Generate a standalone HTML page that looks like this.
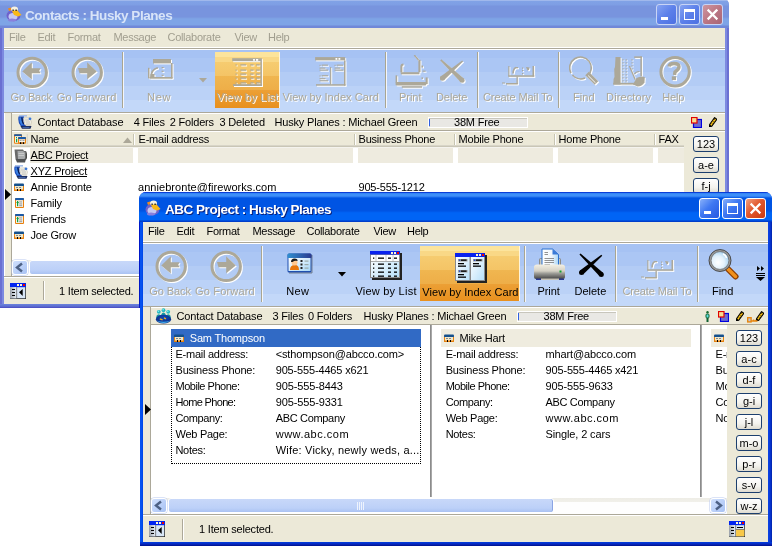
<!DOCTYPE html>
<html><head><meta charset="utf-8"><style>
html,body{margin:0;padding:0;}
body{width:773px;height:546px;overflow:hidden;background:#fff;position:relative;font-family:"Liberation Sans",sans-serif;}
div,svg{position:absolute;}
.t{white-space:nowrap;}
</style></head><body>
<div style="left:0;top:0;width:773px;height:546px;overflow:hidden;will-change:transform">
<div style="left:0px;top:-2px;width:729px;height:310px;background:#7086dc;border-radius:4px 7px 0 0"></div>
<div style="left:0px;top:-2px;width:729px;height:30px;background:linear-gradient(to bottom,#8aa2e6 0,#8aa2e6 2px,#a0b8ec 2px,#a0b8ec 3px,#80a2e6 3px,#7e9ee4 7px,#7894de 8px,#7894de 19px,#7c9ee2 20px,#7ea4e6 21px,#7ea4e6 27px,#7088d8 28px,#7088d8 30px);border-radius:4px 7px 0 0"></div>
<div style="left:0px;top:28px;width:4px;height:280px;background:linear-gradient(to right,#6a70d2 0,#6a70d2 2px,#7d8ae0 2px)"></div>
<div style="left:725px;top:28px;width:4px;height:280px;background:linear-gradient(to right,#7d8ae0 0,#7d8ae0 2px,#6a70d2 2px)"></div>
<div style="left:0px;top:304px;width:729px;height:4px;background:linear-gradient(to bottom,#6c84dc,#5c6cd0 60%,#4848c0)"></div>
<svg style="left:6px;top:6px;" width="16" height="16" viewBox="0 0 16 16"><ellipse cx="7.5" cy="9.5" rx="7" ry="5.8" fill="#6e62cc"/><ellipse cx="7" cy="10.5" rx="4.5" ry="3.5" fill="#c4c8f4"/><ellipse cx="6" cy="14" rx="4" ry="1.5" fill="#8a80dc"/><path d="M2 2.5 L5 1.5 L6 4 L3 5 Z" fill="#f08a1c"/><ellipse cx="8.5" cy="3" rx="3.5" ry="2.5" fill="#f4f0e0"/><path d="M6 5 L11 4 L15.5 9 L12 10.5 L8 9 Z" fill="#f8b818"/><rect x="6.5" y="3.5" width="1.2" height="1.5" fill="#111"/><rect x="9.5" y="3.5" width="1.2" height="1.5" fill="#111"/></svg>
<div class="t" style="left:25px;top:8.61px;font-size:13.5px;line-height:13.5px;color:#d8e4f8;font-weight:bold;letter-spacing:-0.45px">Contacts : Husky Planes</div>
<div style="left:656px;top:4px;width:19px;height:19px;border:1px solid #c8d4f6;border-radius:3px;background:linear-gradient(135deg,#86a4f2 0%,#5c80ea 50%,#4c70e2 100%)"></div>
<div style="left:661px;top:17px;width:7px;height:3px;background:#fff"></div>
<div style="left:679px;top:4px;width:19px;height:19px;border:1px solid #c8d4f6;border-radius:3px;background:linear-gradient(135deg,#86a4f2 0%,#5c80ea 50%,#4c70e2 100%)"></div>
<div style="left:684px;top:9px;width:11px;height:11px;box-sizing:border-box;border:1px solid #fff;border-top-width:3px"></div>
<div style="left:702px;top:4px;width:19px;height:19px;border:1px solid #c8d4f6;border-radius:3px;background:linear-gradient(135deg,#cf96a0 0%,#b97482 55%,#a86676 100%)"></div>
<svg style="left:706px;top:8px;" width="13" height="13" viewBox="0 0 13 13"><path d="M2.5 2.5 L10.5 10.5 M10.5 2.5 L2.5 10.5" stroke="#fff" stroke-width="2.3" stroke-linecap="square"/></svg>
<div style="left:4px;top:28px;width:721px;height:19px;background:#ece9d8"></div>
<div class="t" style="left:9px;top:31.91px;font-size:11px;line-height:11px;color:#a19e8f;font-weight:normal;letter-spacing:-0.3px">File</div>
<div class="t" style="left:37.5px;top:31.91px;font-size:11px;line-height:11px;color:#a19e8f;font-weight:normal;letter-spacing:-0.3px">Edit</div>
<div class="t" style="left:67.5px;top:31.91px;font-size:11px;line-height:11px;color:#a19e8f;font-weight:normal;letter-spacing:-0.3px">Format</div>
<div class="t" style="left:113.5px;top:31.91px;font-size:11px;line-height:11px;color:#a19e8f;font-weight:normal;letter-spacing:-0.3px">Message</div>
<div class="t" style="left:167.5px;top:31.91px;font-size:11px;line-height:11px;color:#a19e8f;font-weight:normal;letter-spacing:-0.3px">Collaborate</div>
<div class="t" style="left:234.5px;top:31.91px;font-size:11px;line-height:11px;color:#a19e8f;font-weight:normal;letter-spacing:-0.3px">View</div>
<div class="t" style="left:268px;top:31.91px;font-size:11px;line-height:11px;color:#a19e8f;font-weight:normal;letter-spacing:-0.3px">Help</div>
<div style="left:4px;top:47px;width:721px;height:3px;background:#fff"></div>
<div style="left:4px;top:48px;width:721px;height:1px;background:#aca899"></div>
<div style="left:4px;top:50px;width:721px;height:62px;background:linear-gradient(to bottom,#a6c2f3 0,#a6c2f3 8px,#abc6f4 8px,#abc6f4 22px,#b3ccf5 22px,#b3ccf5 36px,#bbd2f7 36px,#bbd2f7 50px,#c3d8f9 50px)"></div>
<div style="left:215px;top:52px;width:65px;height:56px;background:linear-gradient(to bottom,#fce49c 0,#fce49c 5px,#f9d886 5px,#f9d886 10px,#f6cc70 10px,#f4c466 24px,#f0b650 24px,#eeae48 38px,#eca036 38px,#e8901e 100%);box-shadow:inset -1px 0 0 #fff4d8"></div>
<div style="left:122px;top:52px;width:1px;height:56px;background:#a8a592;box-shadow:1px 0 0 #f4f6fa"></div>
<div style="left:385px;top:52px;width:1px;height:56px;background:#a8a592;box-shadow:1px 0 0 #f4f6fa"></div>
<div style="left:477px;top:52px;width:1px;height:56px;background:#a8a592;box-shadow:1px 0 0 #f4f6fa"></div>
<div style="left:558px;top:52px;width:1px;height:56px;background:#a8a592;box-shadow:1px 0 0 #f4f6fa"></div>
<svg style="left:16px;top:56px;" width="33" height="33" viewBox="0 0 33 33"><g transform="translate(1,1)"><circle cx="16.2" cy="16.4" r="14.2" fill="none" stroke="#ffffff" stroke-width="3"/><path d="M6.3 15.6 L15.8 6.3 V12.3 H24.6 L23.2 14.8 L24.6 17.2 H15.8 V23.5 Z" fill="#ffffff"/></g><circle cx="16.2" cy="16.4" r="14.2" fill="none" stroke="#aca899" stroke-width="3"/><path d="M6.3 15.6 L15.8 6.3 V12.3 H24.6 L23.2 14.8 L24.6 17.2 H15.8 V23.5 Z" fill="#aca899"/></svg>
<svg style="left:71px;top:56px;" width="33" height="33" viewBox="0 0 33 33"><g transform="translate(1,1)"><circle cx="16.2" cy="16.4" r="14.2" fill="none" stroke="#ffffff" stroke-width="3"/><path d="M25.8 15.6 L16.2 6.3 V12.1 H7 L8.5 17.2 H16.2 V23.3 Z" fill="#ffffff"/></g><circle cx="16.2" cy="16.4" r="14.2" fill="none" stroke="#aca899" stroke-width="3"/><path d="M25.8 15.6 L16.2 6.3 V12.1 H7 L8.5 17.2 H16.2 V23.3 Z" fill="#aca899"/></svg>
<svg style="left:148px;top:59px;" width="27" height="22" viewBox="0 0 27 22"><g transform="translate(1,1)"><rect x="5" y="0" width="18" height="4.4" fill="#ffffff"/><rect x="23" y="4" width="1.6" height="15.4" fill="#ffffff"/><rect x="1.5" y="18" width="23" height="1.7" fill="#ffffff"/><rect x="0" y="8.8" width="1.5" height="10.5" fill="#ffffff"/><path d="M3 18 Q3.5 10.5 9 9 H10" fill="none" stroke="#ffffff" stroke-width="1.6"/><rect x="2.5" y="15" width="4" height="3" fill="#ffffff"/><rect x="13.6" y="8" width="2" height="1.2" fill="#ffffff"/><rect x="13.6" y="11.7" width="2" height="1.2" fill="#ffffff"/><rect x="13.6" y="15.7" width="2" height="1.2" fill="#ffffff"/></g><rect x="5" y="0" width="18" height="4.4" fill="#aca899"/><rect x="23" y="4" width="1.6" height="15.4" fill="#aca899"/><rect x="1.5" y="18" width="23" height="1.7" fill="#aca899"/><rect x="0" y="8.8" width="1.5" height="10.5" fill="#aca899"/><path d="M3 18 Q3.5 10.5 9 9 H10" fill="none" stroke="#aca899" stroke-width="1.6"/><rect x="2.5" y="15" width="4" height="3" fill="#aca899"/><rect x="13.6" y="8" width="2" height="1.2" fill="#aca899"/><rect x="13.6" y="11.7" width="2" height="1.2" fill="#aca899"/><rect x="13.6" y="15.7" width="2" height="1.2" fill="#aca899"/></svg>
<svg style="left:199px;top:78px;" width="9" height="5" viewBox="0 0 9 5"><path d="M0 0 H8 L4 4.5 Z" fill="#aca899"/></svg>
<svg style="left:232px;top:58px;" width="32" height="30" viewBox="0 0 32 30"><g transform="translate(1,1)"><rect x="0.2" y="0.2" width="29.7" height="3" fill="#ffffff"/><rect x="28.4" y="3" width="1.5" height="25" fill="#ffffff"/><rect x="1" y="26.2" width="28.9" height="1.8" fill="#ffffff"/><rect x="3.5" y="6.3" width="1.2" height="1.2" fill="#ffffff"/><rect x="8.3" y="6.3" width="5.8" height="1.2" fill="#ffffff"/><rect x="18.2" y="6.3" width="3.3" height="1.2" fill="#ffffff"/><rect x="24" y="6.3" width="3.7" height="1.2" fill="#ffffff"/><rect x="3.5" y="11.5" width="1.2" height="1.2" fill="#ffffff"/><rect x="8.3" y="11.5" width="5.8" height="1.2" fill="#ffffff"/><rect x="18.2" y="11.5" width="3.3" height="1.2" fill="#ffffff"/><rect x="24" y="11.5" width="3.7" height="1.2" fill="#ffffff"/><rect x="3.5" y="15.5" width="1.2" height="1.2" fill="#ffffff"/><rect x="8.3" y="15.5" width="5.8" height="1.2" fill="#ffffff"/><rect x="18.2" y="15.5" width="3.3" height="1.2" fill="#ffffff"/><rect x="24" y="15.5" width="3.7" height="1.2" fill="#ffffff"/><rect x="3.5" y="19.5" width="1.2" height="1.2" fill="#ffffff"/><rect x="8.3" y="19.5" width="5.8" height="1.2" fill="#ffffff"/><rect x="18.2" y="19.5" width="3.3" height="1.2" fill="#ffffff"/><rect x="24" y="19.5" width="3.7" height="1.2" fill="#ffffff"/><rect x="3.5" y="24.3" width="1.2" height="1.2" fill="#ffffff"/><rect x="8.3" y="24.3" width="5.8" height="1.2" fill="#ffffff"/><rect x="18.2" y="24.3" width="3.3" height="1.2" fill="#ffffff"/><rect x="24" y="24.3" width="3.7" height="1.2" fill="#ffffff"/><rect x="21.1" y="1" width="1.8" height="1.8" fill="#fff"/><rect x="24" y="1" width="2.2" height="1.8" fill="#fff"/></g><rect x="0.2" y="0.2" width="29.7" height="3" fill="#aca899"/><rect x="28.4" y="3" width="1.5" height="25" fill="#aca899"/><rect x="1" y="26.2" width="28.9" height="1.8" fill="#aca899"/><rect x="3.5" y="6.3" width="1.2" height="1.2" fill="#aca899"/><rect x="8.3" y="6.3" width="5.8" height="1.2" fill="#aca899"/><rect x="18.2" y="6.3" width="3.3" height="1.2" fill="#aca899"/><rect x="24" y="6.3" width="3.7" height="1.2" fill="#aca899"/><rect x="3.5" y="11.5" width="1.2" height="1.2" fill="#aca899"/><rect x="8.3" y="11.5" width="5.8" height="1.2" fill="#aca899"/><rect x="18.2" y="11.5" width="3.3" height="1.2" fill="#aca899"/><rect x="24" y="11.5" width="3.7" height="1.2" fill="#aca899"/><rect x="3.5" y="15.5" width="1.2" height="1.2" fill="#aca899"/><rect x="8.3" y="15.5" width="5.8" height="1.2" fill="#aca899"/><rect x="18.2" y="15.5" width="3.3" height="1.2" fill="#aca899"/><rect x="24" y="15.5" width="3.7" height="1.2" fill="#aca899"/><rect x="3.5" y="19.5" width="1.2" height="1.2" fill="#aca899"/><rect x="8.3" y="19.5" width="5.8" height="1.2" fill="#aca899"/><rect x="18.2" y="19.5" width="3.3" height="1.2" fill="#aca899"/><rect x="24" y="19.5" width="3.7" height="1.2" fill="#aca899"/><rect x="3.5" y="24.3" width="1.2" height="1.2" fill="#aca899"/><rect x="8.3" y="24.3" width="5.8" height="1.2" fill="#aca899"/><rect x="18.2" y="24.3" width="3.3" height="1.2" fill="#aca899"/><rect x="24" y="24.3" width="3.7" height="1.2" fill="#aca899"/><rect x="21.1" y="1" width="1.8" height="1.8" fill="#fff"/><rect x="24" y="1" width="2.2" height="1.8" fill="#fff"/></svg>
<svg style="left:315px;top:57px;" width="32" height="30" viewBox="0 0 32 30"><g transform="translate(1,1)"><rect x="0.1" y="0.1" width="30.1" height="3.3" fill="#ffffff"/><rect x="29" y="3.4" width="1.5" height="25.2" fill="#ffffff"/><rect x="1" y="27.2" width="29.5" height="1.5" fill="#ffffff"/><rect x="15.1" y="10" width="1.1" height="17.2" fill="#ffffff"/><rect x="4.5" y="7.8" width="1.1" height="1.1" fill="#ffffff"/><rect x="6.7" y="7.6" width="6.3" height="1.1" fill="#ffffff"/><rect x="4.5" y="10.6" width="5.9" height="1" fill="#ffffff"/><rect x="4.5" y="12.6" width="8.5" height="1.1" fill="#ffffff"/><rect x="4.5" y="18.4" width="1.1" height="1.1" fill="#ffffff"/><rect x="6.7" y="18.2" width="6.3" height="1.1" fill="#ffffff"/><rect x="4.5" y="21.2" width="5.9" height="1" fill="#ffffff"/><rect x="4.5" y="23.2" width="8.5" height="1.1" fill="#ffffff"/><rect x="19.5" y="7.8" width="1.1" height="1.1" fill="#ffffff"/><rect x="21.7" y="7.6" width="6.3" height="1.1" fill="#ffffff"/><rect x="19.5" y="10.6" width="5.8" height="1" fill="#ffffff"/><rect x="19.5" y="12.6" width="8.8" height="1.1" fill="#ffffff"/><rect x="20.5" y="1" width="1.8" height="1.8" fill="#fff"/><rect x="23.5" y="1" width="1.8" height="1.8" fill="#fff"/></g><rect x="0.1" y="0.1" width="30.1" height="3.3" fill="#aca899"/><rect x="29" y="3.4" width="1.5" height="25.2" fill="#aca899"/><rect x="1" y="27.2" width="29.5" height="1.5" fill="#aca899"/><rect x="15.1" y="10" width="1.1" height="17.2" fill="#aca899"/><rect x="4.5" y="7.8" width="1.1" height="1.1" fill="#aca899"/><rect x="6.7" y="7.6" width="6.3" height="1.1" fill="#aca899"/><rect x="4.5" y="10.6" width="5.9" height="1" fill="#aca899"/><rect x="4.5" y="12.6" width="8.5" height="1.1" fill="#aca899"/><rect x="4.5" y="18.4" width="1.1" height="1.1" fill="#aca899"/><rect x="6.7" y="18.2" width="6.3" height="1.1" fill="#aca899"/><rect x="4.5" y="21.2" width="5.9" height="1" fill="#aca899"/><rect x="4.5" y="23.2" width="8.5" height="1.1" fill="#aca899"/><rect x="19.5" y="7.8" width="1.1" height="1.1" fill="#aca899"/><rect x="21.7" y="7.6" width="6.3" height="1.1" fill="#aca899"/><rect x="19.5" y="10.6" width="5.8" height="1" fill="#aca899"/><rect x="19.5" y="12.6" width="8.8" height="1.1" fill="#aca899"/><rect x="20.5" y="1" width="1.8" height="1.8" fill="#fff"/><rect x="23.5" y="1" width="1.8" height="1.8" fill="#fff"/></svg>
<svg style="left:395px;top:55px;" width="35" height="34" viewBox="0 0 35 34"><g transform="translate(1,1)"><path d="M19.3 0.1 L23.5 5" stroke="#ffffff" stroke-width="1.4" fill="none"/><rect x="23.4" y="4.8" width="2.1" height="12.4" fill="#ffffff"/><rect x="26.5" y="10.5" width="1.5" height="2" fill="#ffffff"/><rect x="27.5" y="15.6" width="3.1" height="1.1" fill="#ffffff"/><path d="M6.4 17.2 V11.5 Q6.4 9.5 8.5 9.4" stroke="#ffffff" stroke-width="2" fill="none"/><rect x="5.8" y="17.2" width="18.6" height="2.1" fill="#ffffff"/><rect x="0.6" y="20.3" width="1.6" height="7.7" fill="#ffffff"/><rect x="30.6" y="22.4" width="2.1" height="6.7" fill="#ffffff"/><rect x="26.5" y="22.4" width="1.5" height="1.5" fill="#ffffff"/><rect x="0.6" y="27" width="30.6" height="3.6" rx="1" fill="#ffffff"/><rect x="6.8" y="31.2" width="20.2" height="1.5" fill="#ffffff"/></g><path d="M19.3 0.1 L23.5 5" stroke="#aca899" stroke-width="1.4" fill="none"/><rect x="23.4" y="4.8" width="2.1" height="12.4" fill="#aca899"/><rect x="26.5" y="10.5" width="1.5" height="2" fill="#aca899"/><rect x="27.5" y="15.6" width="3.1" height="1.1" fill="#aca899"/><path d="M6.4 17.2 V11.5 Q6.4 9.5 8.5 9.4" stroke="#aca899" stroke-width="2" fill="none"/><rect x="5.8" y="17.2" width="18.6" height="2.1" fill="#aca899"/><rect x="0.6" y="20.3" width="1.6" height="7.7" fill="#aca899"/><rect x="30.6" y="22.4" width="2.1" height="6.7" fill="#aca899"/><rect x="26.5" y="22.4" width="1.5" height="1.5" fill="#aca899"/><rect x="0.6" y="27" width="30.6" height="3.6" rx="1" fill="#aca899"/><rect x="6.8" y="31.2" width="20.2" height="1.5" fill="#aca899"/></svg>
<svg style="left:440px;top:59px;" width="26" height="26" viewBox="0 0 26 26"><g transform="translate(1,1)"><path d="M0.25 1.38 L20.37 23.10 L23.83 19.50 L1.35 0.22 Z" fill="#ffffff"/><circle cx="22.10" cy="21.30" r="2.50" fill="#ffffff"/><path d="M22.15 1.47 L0.68 17.40 L3.92 21.20 L23.05 2.53 Z" fill="#ffffff"/><circle cx="2.30" cy="19.30" r="2.50" fill="#ffffff"/></g><path d="M0.25 1.38 L20.37 23.10 L23.83 19.50 L1.35 0.22 Z" fill="#aca899"/><circle cx="22.10" cy="21.30" r="2.50" fill="#aca899"/><path d="M22.15 1.47 L0.68 17.40 L3.92 21.20 L23.05 2.53 Z" fill="#aca899"/><circle cx="2.30" cy="19.30" r="2.50" fill="#aca899"/></svg>
<svg style="left:500px;top:66px;" width="36" height="21" viewBox="0 0 36 21"><g transform="translate(1,1)"><rect x="8.3" y="0" width="1.1" height="10.5" fill="#ffffff"/><rect x="8.3" y="9.3" width="26" height="1.5" fill="#ffffff"/><rect x="32.5" y="-2" width="1.6" height="12.5" fill="#ffffff"/><rect x="16.5" y="10.5" width="1.3" height="7.5" fill="#ffffff"/><rect x="6" y="17" width="11.8" height="1.5" fill="#ffffff"/><rect x="2" y="16.5" width="3" height="1" fill="#ffffff"/><path d="M13 7.5 Q13.5 2 16 1.5" stroke="#ffffff" stroke-width="1.6" fill="none"/><rect x="16" y="1" width="2" height="1.3" fill="#ffffff"/><rect x="22" y="1.5" width="1.2" height="1.2" fill="#ffffff"/><rect x="22" y="4" width="1.2" height="1.2" fill="#ffffff"/><rect x="22" y="7" width="1.2" height="1.2" fill="#ffffff"/><path d="M26 1 L29.5 1.5 L29 4 L27.5 4.5 Z" fill="#ffffff"/></g><rect x="8.3" y="0" width="1.1" height="10.5" fill="#aca899"/><rect x="8.3" y="9.3" width="26" height="1.5" fill="#aca899"/><rect x="32.5" y="-2" width="1.6" height="12.5" fill="#aca899"/><rect x="16.5" y="10.5" width="1.3" height="7.5" fill="#aca899"/><rect x="6" y="17" width="11.8" height="1.5" fill="#aca899"/><rect x="2" y="16.5" width="3" height="1" fill="#aca899"/><path d="M13 7.5 Q13.5 2 16 1.5" stroke="#aca899" stroke-width="1.6" fill="none"/><rect x="16" y="1" width="2" height="1.3" fill="#aca899"/><rect x="22" y="1.5" width="1.2" height="1.2" fill="#aca899"/><rect x="22" y="4" width="1.2" height="1.2" fill="#aca899"/><rect x="22" y="7" width="1.2" height="1.2" fill="#aca899"/><path d="M26 1 L29.5 1.5 L29 4 L27.5 4.5 Z" fill="#aca899"/></svg>
<svg style="left:569px;top:56px;" width="32" height="32" viewBox="0 0 32 32"><g transform="translate(1,1)"><path d="M2 17 A10.8 10.8 0 1 1 18.5 20" fill="none" stroke="#ffffff" stroke-width="1.6"/><path d="M3.5 19 A10.8 10.8 0 0 0 16 22" fill="none" stroke="#ffffff" stroke-width="1.6"/><path d="M18 17.5 L27.5 27" stroke="#ffffff" stroke-width="5"/><path d="M19.2 19.6 L26.5 26.9" stroke="#fff" stroke-width="0.9"/></g><path d="M2 17 A10.8 10.8 0 1 1 18.5 20" fill="none" stroke="#aca899" stroke-width="1.6"/><path d="M3.5 19 A10.8 10.8 0 0 0 16 22" fill="none" stroke="#aca899" stroke-width="1.6"/><path d="M18 17.5 L27.5 27" stroke="#aca899" stroke-width="5"/><path d="M19.2 19.6 L26.5 26.9" stroke="#fff" stroke-width="0.9"/></svg>
<svg style="left:611px;top:55px;" width="36" height="34" viewBox="0 0 36 34"><g transform="translate(1,1)"><path d="M4.5 2 H9.6 V29.6 H2.3 L2.6 24 L3.5 22 L3.2 14 L4 12 Z" fill="#ffffff"/><rect x="11.3" y="4.3" width="1.2" height="1.2" fill="#ffffff"/><rect x="14.6" y="4.3" width="1.2" height="1.2" fill="#ffffff"/><rect x="11.3" y="7.3" width="1.2" height="1.2" fill="#ffffff"/><rect x="14.6" y="7.3" width="1.2" height="1.2" fill="#ffffff"/><rect x="11.3" y="10.3" width="1.2" height="1.2" fill="#ffffff"/><rect x="14.6" y="10.3" width="1.2" height="1.2" fill="#ffffff"/><rect x="11.3" y="13.3" width="1.2" height="1.2" fill="#ffffff"/><rect x="14.6" y="13.3" width="1.2" height="1.2" fill="#ffffff"/><rect x="11.3" y="16.3" width="1.2" height="1.2" fill="#ffffff"/><rect x="14.6" y="16.3" width="1.2" height="1.2" fill="#ffffff"/><rect x="11.3" y="19.3" width="1.2" height="1.2" fill="#ffffff"/><rect x="14.6" y="19.3" width="1.2" height="1.2" fill="#ffffff"/><rect x="11.3" y="22.3" width="1.2" height="1.2" fill="#ffffff"/><rect x="14.6" y="22.3" width="1.2" height="1.2" fill="#ffffff"/><rect x="11.3" y="25.3" width="1.2" height="1.2" fill="#ffffff"/><rect x="14.6" y="25.3" width="1.2" height="1.2" fill="#ffffff"/><rect x="20.4" y="4.3" width="1.2" height="1.2" fill="#ffffff"/><rect x="20.4" y="7.3" width="1.2" height="1.2" fill="#ffffff"/><rect x="20.4" y="10.3" width="1.2" height="1.2" fill="#ffffff"/><rect x="20.4" y="13.3" width="1.2" height="1.2" fill="#ffffff"/><rect x="23.2" y="1.4" width="7.7" height="1.5" fill="#ffffff"/><rect x="29.4" y="1.4" width="1.5" height="19.8" fill="#ffffff"/><path d="M18.4 10.9 L24.3 24.8" stroke="#ffffff" stroke-width="1.3"/><path d="M22 29.6 L25.5 23 Q30 20.5 33.8 22 L33.5 27.5 Q31 31.4 26.5 31.4 Z" fill="#ffffff"/><path d="M23.5 19 Q25 16.5 28.4 16.5" stroke="#ffffff" stroke-width="1.2" fill="none"/><rect x="2.3" y="27.8" width="24.2" height="1.8" fill="#ffffff"/></g><path d="M4.5 2 H9.6 V29.6 H2.3 L2.6 24 L3.5 22 L3.2 14 L4 12 Z" fill="#aca899"/><rect x="11.3" y="4.3" width="1.2" height="1.2" fill="#aca899"/><rect x="14.6" y="4.3" width="1.2" height="1.2" fill="#aca899"/><rect x="11.3" y="7.3" width="1.2" height="1.2" fill="#aca899"/><rect x="14.6" y="7.3" width="1.2" height="1.2" fill="#aca899"/><rect x="11.3" y="10.3" width="1.2" height="1.2" fill="#aca899"/><rect x="14.6" y="10.3" width="1.2" height="1.2" fill="#aca899"/><rect x="11.3" y="13.3" width="1.2" height="1.2" fill="#aca899"/><rect x="14.6" y="13.3" width="1.2" height="1.2" fill="#aca899"/><rect x="11.3" y="16.3" width="1.2" height="1.2" fill="#aca899"/><rect x="14.6" y="16.3" width="1.2" height="1.2" fill="#aca899"/><rect x="11.3" y="19.3" width="1.2" height="1.2" fill="#aca899"/><rect x="14.6" y="19.3" width="1.2" height="1.2" fill="#aca899"/><rect x="11.3" y="22.3" width="1.2" height="1.2" fill="#aca899"/><rect x="14.6" y="22.3" width="1.2" height="1.2" fill="#aca899"/><rect x="11.3" y="25.3" width="1.2" height="1.2" fill="#aca899"/><rect x="14.6" y="25.3" width="1.2" height="1.2" fill="#aca899"/><rect x="20.4" y="4.3" width="1.2" height="1.2" fill="#aca899"/><rect x="20.4" y="7.3" width="1.2" height="1.2" fill="#aca899"/><rect x="20.4" y="10.3" width="1.2" height="1.2" fill="#aca899"/><rect x="20.4" y="13.3" width="1.2" height="1.2" fill="#aca899"/><rect x="23.2" y="1.4" width="7.7" height="1.5" fill="#aca899"/><rect x="29.4" y="1.4" width="1.5" height="19.8" fill="#aca899"/><path d="M18.4 10.9 L24.3 24.8" stroke="#aca899" stroke-width="1.3"/><path d="M22 29.6 L25.5 23 Q30 20.5 33.8 22 L33.5 27.5 Q31 31.4 26.5 31.4 Z" fill="#aca899"/><path d="M23.5 19 Q25 16.5 28.4 16.5" stroke="#aca899" stroke-width="1.2" fill="none"/><rect x="2.3" y="27.8" width="24.2" height="1.8" fill="#aca899"/></svg>
<svg style="left:659px;top:56px;" width="33" height="33" viewBox="0 0 33 33"><g transform="translate(1,1)"><circle cx="16.1" cy="15.8" r="14.2" fill="none" stroke="#ffffff" stroke-width="3"/><path d="M10 10.5 Q10.5 7.5 15 7.5 Q20 7.5 20 10.8 Q20 13.5 16 16 L15.5 19" stroke="#ffffff" stroke-width="3.4" fill="none"/><rect x="12.8" y="20.3" width="4.2" height="3.8" fill="#ffffff"/></g><circle cx="16.1" cy="15.8" r="14.2" fill="none" stroke="#aca899" stroke-width="3"/><path d="M10 10.5 Q10.5 7.5 15 7.5 Q20 7.5 20 10.8 Q20 13.5 16 16 L15.5 19" stroke="#aca899" stroke-width="3.4" fill="none"/><rect x="12.8" y="20.3" width="4.2" height="3.8" fill="#aca899"/></svg>
<div class="t" style="left:10.5px;top:91.91px;font-size:11px;line-height:11px;color:#aca899;font-weight:normal;letter-spacing:-0.117px;text-shadow:1px 1px 0 #fff;">Go Back</div>
<div class="t" style="left:56.7px;top:91.91px;font-size:11px;line-height:11px;color:#aca899;font-weight:normal;letter-spacing:0.171px;text-shadow:1px 1px 0 #fff;">Go Forward</div>
<div class="t" style="left:147px;top:91.91px;font-size:11px;line-height:11px;color:#aca899;font-weight:normal;letter-spacing:0.767px;text-shadow:1px 1px 0 #fff;">New</div>
<div class="t" style="left:216.7px;top:91.91px;font-size:11px;line-height:11px;color:#aca899;font-weight:normal;letter-spacing:0.274px;text-shadow:1px 1px 0 #fff;">View by List</div>
<div class="t" style="left:282.6px;top:91.91px;font-size:11px;line-height:11px;color:#aca899;font-weight:normal;letter-spacing:0.059px;text-shadow:1px 1px 0 #fff;">View by Index Card</div>
<div class="t" style="left:399px;top:91.91px;font-size:11px;line-height:11px;color:#aca899;font-weight:normal;letter-spacing:-0.025px;text-shadow:1px 1px 0 #fff;">Print</div>
<div class="t" style="left:436px;top:91.91px;font-size:11px;line-height:11px;color:#aca899;font-weight:normal;letter-spacing:-0.085px;text-shadow:1px 1px 0 #fff;">Delete</div>
<div class="t" style="left:483px;top:91.91px;font-size:11px;line-height:11px;color:#aca899;font-weight:normal;letter-spacing:-0.088px;text-shadow:1px 1px 0 #fff;">Create Mail To</div>
<div class="t" style="left:573px;top:91.91px;font-size:11px;line-height:11px;color:#aca899;font-weight:normal;letter-spacing:0.073px;text-shadow:1px 1px 0 #fff;">Find</div>
<div class="t" style="left:606.1px;top:91.91px;font-size:11px;line-height:11px;color:#aca899;font-weight:normal;letter-spacing:0.111px;text-shadow:1px 1px 0 #fff;">Directory</div>
<div class="t" style="left:662.2px;top:91.91px;font-size:11px;line-height:11px;color:#aca899;font-weight:normal;letter-spacing:-0.156px;text-shadow:1px 1px 0 #fff;">Help</div>
<div style="left:4px;top:112px;width:721px;height:192px;background:#ece9d8"></div>
<div style="left:4px;top:112px;width:721px;height:1px;background:#aca899"></div>
<div style="left:4px;top:113px;width:1px;height:164px;background:#fff"></div>
<div style="left:11px;top:113px;width:1px;height:164px;background:#aca899"></div>
<div style="left:12px;top:113px;width:713px;height:1px;background:#fff"></div>
<div style="left:12px;top:130px;width:713px;height:1px;background:#aca899"></div>
<div style="left:12px;top:131px;width:713px;height:1px;background:#fff"></div>
<svg style="left:17.5px;top:115px;" width="14" height="14" viewBox="0 0 14 14"><rect x="1" y="0" width="8" height="1.6" fill="#a8c0e8"/><path d="M0.5 1.5 Q-0.5 8 3 11.5 L6 13 H9 L8 10.5 L6 9 Q5 5 6 1.5 Z" fill="#1a4ab8"/><path d="M1.2 2.5 Q1 7 3.5 10 L5 10 Q3.2 6.5 3.3 2.5 Z" fill="#3a80e0"/><path d="M3.8 2.5 Q3.8 6 5.5 9" stroke="#08184a" stroke-width="1"/><path d="M5.5 3 L11.5 2.8 L13.5 7 L12.5 10.5 L7 10 Z" fill="#f6f4ea" stroke="#b8b4a0" stroke-width="0.5"/><path d="M7 5 H11 M7.5 7 H12 M8 9 H12" stroke="#9a9a9a" stroke-width="0.6"/><circle cx="12" cy="3.8" r="1.4" fill="#3a78d8"/><path d="M2.5 11 H13.5 L12.5 13.7 H4 Z" fill="#182a5c"/><path d="M4.5 12.4 H11.5" stroke="#5a8ad8" stroke-width="0.7"/></svg>
<div class="t" style="left:37.5px;top:116.91px;font-size:11px;line-height:11px;color:#000;font-weight:normal;letter-spacing:-0.133px;">Contact Database</div>
<div class="t" style="left:133.7px;top:116.91px;font-size:11px;line-height:11px;color:#000;font-weight:normal;letter-spacing:-0.200px;">4 Files</div>
<div class="t" style="left:169.8px;top:116.91px;font-size:11px;line-height:11px;color:#000;font-weight:normal;letter-spacing:-0.200px;">2 Folders</div>
<div class="t" style="left:219.6px;top:116.91px;font-size:11px;line-height:11px;color:#000;font-weight:normal;letter-spacing:-0.200px;">3 Deleted</div>
<div class="t" style="left:274.5px;top:116.91px;font-size:11px;line-height:11px;color:#000;font-weight:normal;letter-spacing:-0.180px;">Husky Planes : Michael Green</div>
<div style="left:428px;top:117px;width:100px;height:11px;background:#e9e8e4;border:1px solid #fff;box-sizing:border-box;box-shadow:inset 1px 1px 0 #c8c6bc"></div>
<div style="left:429px;top:119px;width:1px;height:7px;background:#3060e0"></div>
<div class="t" style="left:454px;top:116.91px;font-size:11px;line-height:11px;color:#000;font-weight:normal;letter-spacing:-0.200px;">38M Free</div>
<svg style="left:691px;top:117px;" width="11" height="11" viewBox="0 0 11 11"><rect x="2.5" y="2.5" width="8" height="8" fill="#6c6cd0" stroke="#0000e0" stroke-width="1.2"/><rect x="0.5" y="0.5" width="5.5" height="5.5" fill="#f8dc90" stroke="#e00000" stroke-width="1.2"/></svg>
<svg style="left:708.5px;top:117px;" width="8" height="10" viewBox="0 0 8 10"><path d="M5.6 0.6 L7.8 2.4 L2.8 9.2 L0.3 9.8 L0.8 7.2 Z" fill="#f8c818" stroke="#000" stroke-width="1.1" stroke-linejoin="round"/><path d="M2.2 5.8 L4 7.4 M3.6 3.9 L5.4 5.5 M5 2 L6.8 3.6" stroke="#7a4a00" stroke-width="0.8"/><path d="M0.3 9.8 L0.8 7.2 L2.8 9.2 Z" fill="#000"/></svg>
<div style="left:12px;top:132px;width:672px;height:145px;background:#fff"></div>
<div style="left:12px;top:132px;width:672px;height:15px;background:#ece9d8"></div>
<div style="left:12px;top:146px;width:672px;height:1px;background:#c9c6b6"></div>
<div style="left:12px;top:145px;width:672px;height:1px;background:#d8d5c8"></div>
<div style="left:12px;top:147px;width:672px;height:1px;background:#f4f3ee"></div>
<div style="left:133px;top:134px;width:1px;height:11px;background:#c7c5b2;box-shadow:1px 0 0 #fff"></div>
<div style="left:354px;top:134px;width:1px;height:11px;background:#c7c5b2;box-shadow:1px 0 0 #fff"></div>
<div style="left:454px;top:134px;width:1px;height:11px;background:#c7c5b2;box-shadow:1px 0 0 #fff"></div>
<div style="left:554px;top:134px;width:1px;height:11px;background:#c7c5b2;box-shadow:1px 0 0 #fff"></div>
<div style="left:654px;top:134px;width:1px;height:11px;background:#c7c5b2;box-shadow:1px 0 0 #fff"></div>
<svg style="left:123px;top:137px;" width="10" height="6" viewBox="0 0 10 6"><path d="M0 6 L4.5 0.5 L9 6 Z" fill="#aca899"/></svg>
<svg style="left:13px;top:134px;" width="15" height="10" viewBox="0 0 15 10"><rect x="1" y="0.2" width="8" height="9.6" rx="1" fill="#e8800e"/><rect x="1" y="0.2" width="8" height="2" rx="1" fill="#1a5aa8"/><rect x="2" y="2.2" width="6" height="6.6" fill="#f8f6ec"/><rect x="3" y="3" width="1" height="1" fill="#10a040"/><rect x="3" y="4.6" width="1.2" height="3.6" fill="#10a040"/><rect x="5" y="3" width="8" height="6.8" rx="1" fill="#e8800e"/><rect x="5" y="3" width="8" height="2.3" rx="1" fill="#1a5aa8"/><rect x="6" y="5.3" width="6" height="3" fill="#f8f6ec"/><rect x="6.5" y="6" width="2" height="0.9" fill="#999"/><rect x="9.5" y="6" width="2" height="0.9" fill="#999"/><rect x="7" y="8.2" width="1.3" height="1.8" fill="#000"/><rect x="9.8" y="8.2" width="1.3" height="1.8" fill="#000"/><rect x="13.8" y="0" width="0.8" height="10" fill="#cfccbe"/></svg>
<div class="t" style="left:30.5px;top:134.41px;font-size:11px;line-height:11px;color:#000;font-weight:normal;letter-spacing:-0.200px;">Name</div>
<div class="t" style="left:138.5px;top:134.41px;font-size:11px;line-height:11px;color:#000;font-weight:normal;letter-spacing:-0.200px;">E-mail address</div>
<div class="t" style="left:358.5px;top:134.41px;font-size:11px;line-height:11px;color:#000;font-weight:normal;letter-spacing:-0.200px;">Business Phone</div>
<div class="t" style="left:458.5px;top:134.41px;font-size:11px;line-height:11px;color:#000;font-weight:normal;letter-spacing:-0.200px;">Mobile Phone</div>
<div class="t" style="left:558.5px;top:134.41px;font-size:11px;line-height:11px;color:#000;font-weight:normal;letter-spacing:-0.200px;">Home Phone</div>
<div class="t" style="left:658.5px;top:134.41px;font-size:11px;line-height:11px;color:#000;font-weight:normal;letter-spacing:-0.200px;">FAX</div>
<div style="left:30px;top:148px;width:103px;height:15px;background:#eeebdf"></div>
<div style="left:138px;top:148px;width:215px;height:15px;background:#eeebdf"></div>
<div style="left:358px;top:148px;width:95px;height:15px;background:#eeebdf"></div>
<div style="left:458px;top:148px;width:95px;height:15px;background:#eeebdf"></div>
<div style="left:558px;top:148px;width:95px;height:15px;background:#eeebdf"></div>
<div style="left:658px;top:148px;width:26px;height:15px;background:#eeebdf"></div>
<div class="t" style="left:30.5px;top:149.91px;font-size:11px;line-height:11px;color:#000;font-weight:normal;letter-spacing:-0.200px;text-decoration:underline;text-decoration-skip-ink:none;text-underline-offset:1px">ABC Project</div>
<div class="t" style="left:30.5px;top:165.91px;font-size:11px;line-height:11px;color:#000;font-weight:normal;letter-spacing:-0.200px;text-decoration:underline;text-decoration-skip-ink:none;text-underline-offset:1px">XYZ Project</div>
<div class="t" style="left:30.5px;top:181.91px;font-size:11px;line-height:11px;color:#000;font-weight:normal;letter-spacing:-0.200px;">Annie Bronte</div>
<div class="t" style="left:30.5px;top:197.91px;font-size:11px;line-height:11px;color:#000;font-weight:normal;letter-spacing:-0.200px;">Family</div>
<div class="t" style="left:30.5px;top:213.91px;font-size:11px;line-height:11px;color:#000;font-weight:normal;letter-spacing:-0.200px;">Friends</div>
<div class="t" style="left:30.5px;top:229.91px;font-size:11px;line-height:11px;color:#000;font-weight:normal;letter-spacing:-0.200px;">Joe Grow</div>
<svg style="left:14px;top:149px;" width="14" height="14" viewBox="0 0 14 14"><path d="M0.5 0.5 H9 L10 2 H12 L13 4 V9 L12 11 H3 L1.5 10 Z" fill="#6a6a6a"/><path d="M3.5 2 H9 L11.5 4 V9 L10 10 H4 Z" fill="#a8aaac"/><path d="M4.5 4.5 H10 M4.5 6.5 H10" stroke="#d0d0d0" stroke-width="0.8"/><path d="M1.5 10 H12 L11 13.5 H3 Z" fill="#505254"/><path d="M11.5 4 L13 5 V9 L11.5 10 Z" fill="#484848"/></svg>
<svg style="left:13.8px;top:164.5px;" width="14" height="14" viewBox="0 0 14 14"><rect x="1" y="0" width="8" height="1.6" fill="#a8c0e8"/><path d="M0.5 1.5 Q-0.5 8 3 11.5 L6 13 H9 L8 10.5 L6 9 Q5 5 6 1.5 Z" fill="#1a4ab8"/><path d="M1.2 2.5 Q1 7 3.5 10 L5 10 Q3.2 6.5 3.3 2.5 Z" fill="#3a80e0"/><path d="M3.8 2.5 Q3.8 6 5.5 9" stroke="#08184a" stroke-width="1"/><path d="M5.5 3 L11.5 2.8 L13.5 7 L12.5 10.5 L7 10 Z" fill="#f6f4ea" stroke="#b8b4a0" stroke-width="0.5"/><path d="M7 5 H11 M7.5 7 H12 M8 9 H12" stroke="#9a9a9a" stroke-width="0.6"/><circle cx="12" cy="3.8" r="1.4" fill="#3a78d8"/><path d="M2.5 11 H13.5 L12.5 13.7 H4 Z" fill="#182a5c"/><path d="M4.5 12.4 H11.5" stroke="#5a8ad8" stroke-width="0.7"/></svg>
<svg style="left:14px;top:183px;" width="10" height="8" viewBox="0 0 10 8"><rect x="0" y="0.5" width="10" height="3" rx="1" fill="#15508c"/><rect x="0" y="3" width="10" height="5" fill="#e8820e"/><rect x="1" y="3" width="8" height="3.5" fill="#eee8cc"/><rect x="2" y="4" width="2" height="1" fill="#888"/><rect x="5" y="4" width="2" height="1" fill="#888"/><rect x="3" y="6" width="1" height="2" fill="#000"/><rect x="6" y="6" width="1" height="2" fill="#000"/></svg>
<svg style="left:15px;top:198px;" width="9" height="10" viewBox="0 0 9 10"><rect x="0" y="0" width="9" height="10" rx="1" fill="#e8800e"/><rect x="0" y="0" width="9" height="2.2" rx="1" fill="#1a5aa8"/><rect x="1" y="2.2" width="7" height="6.8" fill="#f6f4ea"/><rect x="2" y="3" width="1.2" height="5.2" fill="#10a040"/><rect x="1.5" y="4" width="2.2" height="1" fill="#10a040"/><rect x="4.2" y="3.5" width="3" height="0.9" fill="#8a8a8a"/><rect x="4.2" y="5.5" width="3" height="0.9" fill="#8a8a8a"/><rect x="4.2" y="7.3" width="3" height="0.9" fill="#8a8a8a"/></svg>
<svg style="left:15px;top:214px;" width="9" height="10" viewBox="0 0 9 10"><rect x="0" y="0" width="9" height="10" rx="1" fill="#e8800e"/><rect x="0" y="0" width="9" height="2.2" rx="1" fill="#1a5aa8"/><rect x="1" y="2.2" width="7" height="6.8" fill="#f6f4ea"/><rect x="2" y="3" width="1.2" height="5.2" fill="#10a040"/><rect x="1.5" y="4" width="2.2" height="1" fill="#10a040"/><rect x="4.2" y="3.5" width="3" height="0.9" fill="#8a8a8a"/><rect x="4.2" y="5.5" width="3" height="0.9" fill="#8a8a8a"/><rect x="4.2" y="7.3" width="3" height="0.9" fill="#8a8a8a"/></svg>
<svg style="left:14px;top:231px;" width="10" height="8" viewBox="0 0 10 8"><rect x="0" y="0.5" width="10" height="3" rx="1" fill="#15508c"/><rect x="0" y="3" width="10" height="5" fill="#e8820e"/><rect x="1" y="3" width="8" height="3.5" fill="#eee8cc"/><rect x="2" y="4" width="2" height="1" fill="#888"/><rect x="5" y="4" width="2" height="1" fill="#888"/><rect x="3" y="6" width="1" height="2" fill="#000"/><rect x="6" y="6" width="1" height="2" fill="#000"/></svg>
<div class="t" style="left:138px;top:181.91px;font-size:11px;line-height:11px;color:#000;font-weight:normal;letter-spacing:0.053px;">anniebronte@fireworks.com</div>
<div class="t" style="left:358.5px;top:181.91px;font-size:11px;line-height:11px;color:#000;font-weight:normal;letter-spacing:-0.200px;">905-555-1212</div>
<svg style="left:5px;top:189px;" width="6" height="11" viewBox="0 0 6 11"><path d="M0 0 L6 5.5 L0 11 Z" fill="#000"/></svg>
<div style="left:684px;top:132px;width:41px;height:145px;background:#ece9d8"></div>
<div style="left:693px;top:136px;width:24px;height:14px;border:1px solid #1c3f6e;border-radius:3px;background:linear-gradient(to bottom,#fff 0%,#f4f3ee 60%,#dedbd0 100%)"></div>
<div class="t" style="left:693px;top:138.5px;width:26px;text-align:center;font-size:11px;line-height:11px;color:#000">123</div>
<div style="left:693px;top:157px;width:24px;height:14px;border:1px solid #1c3f6e;border-radius:3px;background:linear-gradient(to bottom,#fff 0%,#f4f3ee 60%,#dedbd0 100%)"></div>
<div class="t" style="left:693px;top:159.5px;width:26px;text-align:center;font-size:11px;line-height:11px;color:#000">a-e</div>
<div style="left:693px;top:178px;width:24px;height:14px;border:1px solid #1c3f6e;border-radius:3px;background:linear-gradient(to bottom,#fff 0%,#f4f3ee 60%,#dedbd0 100%)"></div>
<div class="t" style="left:693px;top:180.5px;width:26px;text-align:center;font-size:11px;line-height:11px;color:#000">f-j</div>
<div style="left:12px;top:260px;width:672px;height:16px;background:linear-gradient(to bottom,#eeede6 0,#f1f0ea 4px,#fefefe 4px)"></div>
<div style="left:12px;top:260px;width:14px;height:13px;border:1px solid #fff;border-radius:3px;background:linear-gradient(135deg,#d0e0fc,#b8cef8 60%,#a8c2f2);box-shadow:0 0 0 0.5px #b8c8f0"></div>
<svg style="left:12px;top:260px;" width="16" height="15" viewBox="0 0 16 15"><path d="M10 3.5 L5 7.5 L10 11.5" stroke="#4d6185" stroke-width="2.4" fill="none"/></svg>
<div style="left:29px;top:260px;width:700px;height:13px;border:1px solid #fff;border-radius:3px;background:linear-gradient(to bottom,#c8d8f9,#bcd0f8 70%,#aac2f2)"></div>
<div style="left:4px;top:276px;width:721px;height:1px;background:#aca899"></div>
<div style="left:4px;top:277px;width:721px;height:1px;background:#fff"></div>
<svg style="left:10px;top:283px;" width="16" height="16" viewBox="0 0 16 16"><defs><linearGradient id="sg" x1="0" x2="1"><stop offset="0" stop-color="#9aa0a8"/><stop offset="1" stop-color="#e8f0f8"/></linearGradient></defs><rect x="0" y="0" width="16" height="16" fill="#222"/><rect x="0" y="0" width="15.3" height="15.3" fill="#d8e6f6"/><rect x="0" y="0" width="16" height="4.2" fill="#0024f0"/><rect x="7" y="1" width="2" height="2" fill="#fff8d0"/><rect x="10" y="1" width="2" height="2" fill="#fff8d0"/><rect x="13" y="1" width="2" height="2" fill="#f00000"/><rect x="0" y="4.2" width="6.4" height="11.1" fill="url(#sg)"/><rect x="2" y="6" width="3" height="1" fill="#000"/><rect x="2" y="9" width="3" height="1" fill="#000"/><rect x="2" y="12" width="3" height="1" fill="#000"/><rect x="6.4" y="4.2" width="0.7" height="11.1" fill="#555"/><path d="M9 9.3 L12.7 6 V13 Z" fill="#000"/></svg>
<div style="left:43px;top:281px;width:1px;height:19px;background:#aca899;box-shadow:1px 0 0 #fff"></div>
<div class="t" style="left:59px;top:285.91px;font-size:11px;line-height:11px;color:#000;font-weight:normal;letter-spacing:-0.200px;">1 Item selected.</div>
<div style="left:139px;top:192px;width:633px;height:354px;background:#0b3de6;border-radius:7px 7px 0 0"></div>
<div style="left:139px;top:192px;width:633px;height:30px;background:linear-gradient(to bottom,#0a3ed8 0,#0a3ed8 1px,#2a7af2 1px,#3d8ff9 2px,#3d8ff9 4px,#2472ef 5px,#0054e3 6px,#0054e3 19px,#005ef0 20px,#0064f5 21px,#0064f5 28px,#003dca 29px,#003dca 30px);border-radius:7px 7px 0 0"></div>
<div style="left:139px;top:222px;width:4px;height:324px;background:linear-gradient(to right,#0018c8 0,#0018c8 1px,#0048e8 1px,#0a5cf8 2px,#0048e8 3px)"></div>
<div style="left:768px;top:222px;width:4px;height:324px;background:linear-gradient(to right,#0a44e4,#0838d8 50%,#0022a8)"></div>
<div style="left:139px;top:542px;width:633px;height:4px;background:linear-gradient(to bottom,#0040e0,#0828c0 50%,#00108a)"></div>
<svg style="left:145px;top:200px;" width="16" height="16" viewBox="0 0 16 16"><ellipse cx="7.5" cy="9.5" rx="7" ry="5.8" fill="#6e62cc"/><ellipse cx="7" cy="10.5" rx="4.5" ry="3.5" fill="#c4c8f4"/><ellipse cx="6" cy="14" rx="4" ry="1.5" fill="#8a80dc"/><path d="M2 2.5 L5 1.5 L6 4 L3 5 Z" fill="#f08a1c"/><ellipse cx="8.5" cy="3" rx="3.5" ry="2.5" fill="#f4f0e0"/><path d="M6 5 L11 4 L15.5 9 L12 10.5 L8 9 Z" fill="#f8b818"/><rect x="6.5" y="3.5" width="1.2" height="1.5" fill="#111"/><rect x="9.5" y="3.5" width="1.2" height="1.5" fill="#111"/></svg>
<div class="t" style="left:165px;top:203.11px;font-size:13.5px;line-height:13.5px;color:#fff;font-weight:bold;letter-spacing:-0.48px;text-shadow:1px 1px 0 #0a1f7a">ABC Project : Husky Planes</div>
<div style="left:699px;top:198px;width:19px;height:19px;border:1px solid #fff;border-radius:3px;background:linear-gradient(135deg,#88b0fa 0%,#3f78f2 45%,#2458e0 100%)"></div>
<div style="left:704px;top:211px;width:7px;height:3px;background:#fff"></div>
<div style="left:722px;top:198px;width:19px;height:19px;border:1px solid #fff;border-radius:3px;background:linear-gradient(135deg,#88b0fa 0%,#3f78f2 45%,#2458e0 100%)"></div>
<div style="left:727px;top:203px;width:11px;height:11px;box-sizing:border-box;border:1px solid #fff;border-top-width:3px"></div>
<div style="left:745px;top:198px;width:19px;height:19px;border:1px solid #fff;border-radius:3px;background:linear-gradient(135deg,#f0a080 0%,#e2582e 45%,#cc3a10 100%)"></div>
<svg style="left:749px;top:202px;" width="13" height="13" viewBox="0 0 13 13"><path d="M2.5 2.5 L10.5 10.5 M10.5 2.5 L2.5 10.5" stroke="#fff" stroke-width="2.3" stroke-linecap="square"/></svg>
<div style="left:143px;top:222px;width:625px;height:19px;background:#ece9d8"></div>
<div class="t" style="left:148px;top:225.91px;font-size:11px;line-height:11px;color:#000;font-weight:normal;letter-spacing:-0.3px">File</div>
<div class="t" style="left:176.5px;top:225.91px;font-size:11px;line-height:11px;color:#000;font-weight:normal;letter-spacing:-0.3px">Edit</div>
<div class="t" style="left:206.5px;top:225.91px;font-size:11px;line-height:11px;color:#000;font-weight:normal;letter-spacing:-0.3px">Format</div>
<div class="t" style="left:252.5px;top:225.91px;font-size:11px;line-height:11px;color:#000;font-weight:normal;letter-spacing:-0.3px">Message</div>
<div class="t" style="left:306.5px;top:225.91px;font-size:11px;line-height:11px;color:#000;font-weight:normal;letter-spacing:-0.3px">Collaborate</div>
<div class="t" style="left:373.5px;top:225.91px;font-size:11px;line-height:11px;color:#000;font-weight:normal;letter-spacing:-0.3px">View</div>
<div class="t" style="left:407px;top:225.91px;font-size:11px;line-height:11px;color:#000;font-weight:normal;letter-spacing:-0.3px">Help</div>
<div style="left:143px;top:241px;width:625px;height:3px;background:#fff"></div>
<div style="left:143px;top:242px;width:625px;height:1px;background:#aca899"></div>
<div style="left:143px;top:244px;width:625px;height:62px;background:linear-gradient(to bottom,#a6c2f3 0,#a6c2f3 8px,#abc6f4 8px,#abc6f4 22px,#b3ccf5 22px,#b3ccf5 36px,#bbd2f7 36px,#bbd2f7 50px,#c3d8f9 50px)"></div>
<div style="left:420px;top:246px;width:100px;height:55px;background:linear-gradient(to bottom,#fce49c 0,#fce49c 5px,#f9d886 5px,#f9d886 10px,#f6cc70 10px,#f4c466 24px,#f0b650 24px,#eeae48 38px,#eca036 38px,#e8901e 100%);box-shadow:inset -1px 0 0 #fff4d8"></div>
<div style="left:261px;top:246px;width:1px;height:56px;background:#a8a592;box-shadow:1px 0 0 #f4f6fa"></div>
<div style="left:524px;top:246px;width:1px;height:56px;background:#a8a592;box-shadow:1px 0 0 #f4f6fa"></div>
<div style="left:615px;top:246px;width:1px;height:56px;background:#a8a592;box-shadow:1px 0 0 #f4f6fa"></div>
<div style="left:697px;top:246px;width:1px;height:56px;background:#a8a592;box-shadow:1px 0 0 #f4f6fa"></div>
<svg style="left:155px;top:250px;" width="33" height="33" viewBox="0 0 33 33"><g transform="translate(1,1)"><circle cx="16.2" cy="16.4" r="14.2" fill="none" stroke="#ffffff" stroke-width="3"/><path d="M6.3 15.6 L15.8 6.3 V12.3 H24.6 L23.2 14.8 L24.6 17.2 H15.8 V23.5 Z" fill="#ffffff"/></g><circle cx="16.2" cy="16.4" r="14.2" fill="none" stroke="#aca899" stroke-width="3"/><path d="M6.3 15.6 L15.8 6.3 V12.3 H24.6 L23.2 14.8 L24.6 17.2 H15.8 V23.5 Z" fill="#aca899"/></svg>
<svg style="left:210px;top:250px;" width="33" height="33" viewBox="0 0 33 33"><g transform="translate(1,1)"><circle cx="16.2" cy="16.4" r="14.2" fill="none" stroke="#ffffff" stroke-width="3"/><path d="M25.8 15.6 L16.2 6.3 V12.1 H7 L8.5 17.2 H16.2 V23.3 Z" fill="#ffffff"/></g><circle cx="16.2" cy="16.4" r="14.2" fill="none" stroke="#aca899" stroke-width="3"/><path d="M25.8 15.6 L16.2 6.3 V12.1 H7 L8.5 17.2 H16.2 V23.3 Z" fill="#aca899"/></svg>
<svg style="left:287px;top:253px;" width="26" height="21" viewBox="0 0 26 21"><defs><linearGradient id="nh" x1="0" x2="1"><stop offset="0" stop-color="#2f8fd0"/><stop offset="1" stop-color="#2b3a8f"/></linearGradient><linearGradient id="nb" x1="0" y1="0" x2="1" y2="1"><stop offset="0" stop-color="#ffffff"/><stop offset="1" stop-color="#a8d8f8"/></linearGradient></defs><rect x="0.5" y="0.5" width="24" height="19" rx="1.5" fill="#1f4fb0"/><rect x="0.5" y="0.5" width="24" height="5" rx="1.5" fill="url(#nh)"/><rect x="1.5" y="5" width="22" height="13" fill="url(#nb)"/><path d="M3 17 Q3 12 8 12 Q12 12 12 17 Z" fill="#e8760c"/><circle cx="7.5" cy="9.5" r="3" fill="#ffc890"/><path d="M4 9 Q4 5.5 7.5 5.5 Q11 5.5 10.5 8 Q8 7 5.5 9 Z" fill="#1a1a1a"/><rect x="13.5" y="7" width="2" height="2" fill="#222"/><rect x="13.5" y="10.5" width="2" height="2" fill="#222"/><rect x="13.5" y="14" width="2" height="2" fill="#222"/><rect x="17.5" y="7.5" width="4" height="1.2" fill="#9aa"/><rect x="17.5" y="11" width="4" height="1.2" fill="#9aa"/><rect x="17.5" y="14.5" width="4" height="1.2" fill="#9aa"/><path d="M25 2 V20 H2" stroke="#333" stroke-width="1" fill="none" opacity="0.5"/></svg>
<svg style="left:338px;top:272px;" width="9" height="5" viewBox="0 0 9 5"><path d="M0 0 H8 L4 4.5 Z" fill="#000"/></svg>
<svg style="left:370px;top:251px;" width="32" height="30" viewBox="0 0 32 30"><defs><linearGradient id="lb" x1="0" y1="0" x2="1" y2="1"><stop offset="0" stop-color="#ffffff"/><stop offset="1" stop-color="#b8e0fa"/></linearGradient></defs><rect x="2" y="2" width="30" height="27" fill="#222"/><rect x="0" y="0" width="30" height="27" fill="#8a8a8a"/><rect x="1" y="4" width="28" height="22" fill="url(#lb)"/><rect x="0" y="0" width="30" height="3.5" fill="#0a22ee"/><rect x="21" y="1" width="2" height="2" fill="#fff8d0"/><rect x="24" y="1" width="2" height="2" fill="#fff8d0"/><rect x="27" y="1" width="2" height="2" fill="#e00"/><rect x="1" y="4" width="28" height="6" fill="#fff"/><path d="M6 4 V10 M16 4 V10 M23 4 V10" stroke="#bbb" stroke-width="0.8"/><rect x="1" y="10" width="28" height="0.8" fill="#999"/><rect x="3" y="6.5" width="1.3" height="1.3" fill="#000"/><rect x="8" y="6.5" width="6" height="1.3" fill="#000"/><rect x="18" y="6.5" width="3" height="1.3" fill="#000"/><rect x="24" y="6.5" width="3" height="1.3" fill="#000"/><rect x="3" y="12.5" width="1.3" height="1.3" fill="#000"/><rect x="8" y="12.5" width="6" height="1.3" fill="#000"/><rect x="18" y="12.5" width="3" height="1.3" fill="#000"/><rect x="24" y="12.5" width="3" height="1.3" fill="#000"/><rect x="3" y="16.5" width="1.3" height="1.3" fill="#000"/><rect x="8" y="16.5" width="6" height="1.3" fill="#000"/><rect x="18" y="16.5" width="3" height="1.3" fill="#000"/><rect x="24" y="16.5" width="3" height="1.3" fill="#000"/><rect x="3" y="20.5" width="1.3" height="1.3" fill="#000"/><rect x="8" y="20.5" width="6" height="1.3" fill="#000"/><rect x="18" y="20.5" width="3" height="1.3" fill="#000"/><rect x="24" y="20.5" width="3" height="1.3" fill="#000"/><rect x="3" y="24.5" width="1.3" height="1.3" fill="#000"/><rect x="8" y="24.5" width="6" height="1.3" fill="#000"/><rect x="18" y="24.5" width="3" height="1.3" fill="#000"/><rect x="24" y="24.5" width="3" height="1.3" fill="#000"/></svg>
<svg style="left:455px;top:253px;" width="32" height="30" viewBox="0 0 32 30"><defs><linearGradient id="cb" x1="0" y1="0" x2="1" y2="1"><stop offset="0" stop-color="#ffffff"/><stop offset="1" stop-color="#b8e0fa"/></linearGradient></defs><rect x="2" y="2" width="30" height="28" fill="#222"/><rect x="0" y="0" width="30" height="28" fill="#8a8a8a"/><rect x="1" y="4" width="13.5" height="23" fill="url(#cb)"/><rect x="16" y="4" width="13" height="23" fill="url(#cb)"/><rect x="0" y="0" width="30" height="4" fill="#0a22ee"/><rect x="21" y="1" width="2" height="2" fill="#fff8d0"/><rect x="24" y="1" width="2" height="2" fill="#fff8d0"/><rect x="27" y="1" width="2" height="2" fill="#e00"/><rect x="3" y="6" width="9.5" height="2.5" fill="#999"/><rect x="4" y="6.5" width="1.3" height="1.3" fill="#1040d0"/><rect x="6" y="6.5" width="5.5" height="1.3" fill="#000"/><rect x="3" y="10" width="6" height="1.3" fill="#000"/><rect x="3" y="12.5" width="8" height="1.3" fill="#000"/><rect x="3" y="17" width="9.5" height="2.5" fill="#999"/><rect x="4" y="17.5" width="1.3" height="1.3" fill="#1040d0"/><rect x="6" y="17.5" width="5.5" height="1.3" fill="#000"/><rect x="3" y="21" width="6" height="1.3" fill="#000"/><rect x="3" y="23.5" width="8" height="1.3" fill="#000"/><rect x="18" y="6" width="9.5" height="2.5" fill="#999"/><rect x="19" y="6.5" width="1.3" height="1.3" fill="#1040d0"/><rect x="21" y="6.5" width="5.5" height="1.3" fill="#000"/><rect x="18" y="10" width="6" height="1.3" fill="#000"/><rect x="18" y="12.5" width="8" height="1.3" fill="#000"/></svg>
<svg style="left:533px;top:248px;" width="33" height="32" viewBox="0 0 33 32"><defs><linearGradient id="pb" x1="0" y1="0" x2="0" y2="1"><stop offset="0" stop-color="#f4f0e4"/><stop offset="0.45" stop-color="#d4d0c4"/><stop offset="0.6" stop-color="#a0a09a"/><stop offset="1" stop-color="#444"/></linearGradient><linearGradient id="pp" x1="0" y1="0" x2="1" y2="0"><stop offset="0" stop-color="#ffffff"/><stop offset="0.6" stop-color="#f0f6fc"/><stop offset="1" stop-color="#a8d4f4"/></linearGradient></defs><rect x="6" y="10" width="22" height="10" rx="2" fill="#8c8c88"/><rect x="7" y="11" width="20" height="8" fill="#c8c8c0"/><path d="M9 1 H19.5 L25.5 6.5 V19 H9 Z" fill="url(#pp)" stroke="#2a70d0" stroke-width="1"/><path d="M19.5 1 L25.5 6.5 H19.5 Z" fill="#3a7ad8"/><path d="M11.5 4.5 H15 M11.5 6.5 H15 M11.5 10.5 H21 M11.5 12.5 H21 M11.5 14.5 H21 M11.5 16.5 H17" stroke="#777" stroke-width="0.8"/><path d="M1 19 Q1 16.5 4 16.5 H29 Q32 16.5 32 19 V29 Q32 31 30 31 H3 Q1 31 1 29 Z" fill="url(#pb)"/><rect x="26.5" y="22.5" width="2" height="2" fill="#10a030"/><rect x="3" y="30.5" width="5" height="1.5" fill="#2a3a90"/><rect x="26" y="30.5" width="5" height="1.5" fill="#2a3a90"/><rect x="8" y="30.5" width="18" height="1.5" fill="#c8c4b8"/></svg>
<svg style="left:579px;top:253px;" width="27" height="27" viewBox="0 0 27 27"><path d="M0.45 1.58 L20.57 23.30 L24.03 19.70 L1.55 0.42 Z" fill="#000"/><circle cx="22.30" cy="21.50" r="2.50" fill="#000"/><path d="M22.35 1.67 L0.88 17.60 L4.12 21.40 L23.25 2.73 Z" fill="#000"/><circle cx="2.50" cy="19.50" r="2.50" fill="#000"/></svg>
<svg style="left:639px;top:260px;" width="36" height="21" viewBox="0 0 36 21"><g transform="translate(1,1)"><rect x="8.3" y="0" width="1.1" height="10.5" fill="#ffffff"/><rect x="8.3" y="9.3" width="26" height="1.5" fill="#ffffff"/><rect x="32.5" y="-2" width="1.6" height="12.5" fill="#ffffff"/><rect x="16.5" y="10.5" width="1.3" height="7.5" fill="#ffffff"/><rect x="6" y="17" width="11.8" height="1.5" fill="#ffffff"/><rect x="2" y="16.5" width="3" height="1" fill="#ffffff"/><path d="M13 7.5 Q13.5 2 16 1.5" stroke="#ffffff" stroke-width="1.6" fill="none"/><rect x="16" y="1" width="2" height="1.3" fill="#ffffff"/><rect x="22" y="1.5" width="1.2" height="1.2" fill="#ffffff"/><rect x="22" y="4" width="1.2" height="1.2" fill="#ffffff"/><rect x="22" y="7" width="1.2" height="1.2" fill="#ffffff"/><path d="M26 1 L29.5 1.5 L29 4 L27.5 4.5 Z" fill="#ffffff"/></g><rect x="8.3" y="0" width="1.1" height="10.5" fill="#aca899"/><rect x="8.3" y="9.3" width="26" height="1.5" fill="#aca899"/><rect x="32.5" y="-2" width="1.6" height="12.5" fill="#aca899"/><rect x="16.5" y="10.5" width="1.3" height="7.5" fill="#aca899"/><rect x="6" y="17" width="11.8" height="1.5" fill="#aca899"/><rect x="2" y="16.5" width="3" height="1" fill="#aca899"/><path d="M13 7.5 Q13.5 2 16 1.5" stroke="#aca899" stroke-width="1.6" fill="none"/><rect x="16" y="1" width="2" height="1.3" fill="#aca899"/><rect x="22" y="1.5" width="1.2" height="1.2" fill="#aca899"/><rect x="22" y="4" width="1.2" height="1.2" fill="#aca899"/><rect x="22" y="7" width="1.2" height="1.2" fill="#aca899"/><path d="M26 1 L29.5 1.5 L29 4 L27.5 4.5 Z" fill="#aca899"/></svg>
<svg style="left:708px;top:249px;" width="31" height="31" viewBox="0 0 31 31"><defs><radialGradient id="fg" cx="0.4" cy="0.6" r="0.7"><stop offset="0" stop-color="#ffffff"/><stop offset="0.45" stop-color="#e4f2fc"/><stop offset="1" stop-color="#8cc4ec"/></radialGradient></defs><path d="M20 20 L27.5 27.5" stroke="#8a3c00" stroke-width="6" stroke-linecap="round"/><path d="M20 20 L27.5 27.5" stroke="#f0901c" stroke-width="3.5" stroke-linecap="round"/><circle cx="12" cy="11.5" r="10" fill="url(#fg)" stroke="#9a9a9a" stroke-width="2.2"/><circle cx="12" cy="11.5" r="11" fill="none" stroke="#333" stroke-width="0.8"/><circle cx="12" cy="11.5" r="8.9" fill="none" stroke="#555" stroke-width="0.6"/><path d="M15 5 Q18 6 18.5 9" stroke="#fff" stroke-width="1.5" fill="none"/></svg>
<svg style="left:756px;top:265px;" width="10" height="17" viewBox="0 0 10 17"><path d="M1 1 L4 3.5 L1 6 Z M5 1 L8 3.5 L5 6 Z" fill="#000"/><rect x="0" y="8" width="9" height="1" fill="#000"/><rect x="0" y="10" width="9" height="1" fill="#000"/><path d="M0 12 H9 L4.5 16 Z" fill="#000"/></svg>
<div class="t" style="left:149.3px;top:285.91px;font-size:11px;line-height:11px;color:#aca899;font-weight:normal;letter-spacing:-0.074px;text-shadow:1px 1px 0 #fff;">Go Back</div>
<div class="t" style="left:195.1px;top:285.91px;font-size:11px;line-height:11px;color:#aca899;font-weight:normal;letter-spacing:0.171px;text-shadow:1px 1px 0 #fff;">Go Forward</div>
<div class="t" style="left:286.2px;top:285.91px;font-size:11px;line-height:11px;color:#000;font-weight:normal;letter-spacing:0.333px;">New</div>
<div class="t" style="left:355.4px;top:285.91px;font-size:11px;line-height:11px;color:#000;font-weight:normal;letter-spacing:0.232px;">View by List</div>
<div class="t" style="left:537.5px;top:285.91px;font-size:11px;line-height:11px;color:#000;font-weight:normal;letter-spacing:-0.065px;">Print</div>
<div class="t" style="left:574.5px;top:285.91px;font-size:11px;line-height:11px;color:#000;font-weight:normal;letter-spacing:-0.002px;">Delete</div>
<div class="t" style="left:712px;top:285.91px;font-size:11px;line-height:11px;color:#000;font-weight:normal;letter-spacing:-0.027px;">Find</div>
<div class="t" style="left:622.5px;top:285.91px;font-size:11px;line-height:11px;color:#aca899;font-weight:normal;letter-spacing:-0.131px;text-shadow:1px 1px 0 #fff;">Create Mail To</div>
<div class="t" style="left:422.3px;top:286.91px;font-size:11px;line-height:11px;color:#000;font-weight:normal;letter-spacing:0.059px;">View by Index Card</div>
<div style="left:143px;top:306px;width:625px;height:236px;background:#ece9d8"></div>
<div style="left:143px;top:306px;width:625px;height:1px;background:#aca899"></div>
<div style="left:150px;top:307px;width:1px;height:208px;background:#aca899"></div>
<div style="left:151px;top:307px;width:617px;height:1px;background:#fff"></div>
<div style="left:151px;top:324px;width:617px;height:1px;background:#aca899"></div>
<svg style="left:155px;top:308px;" width="17" height="16" viewBox="0 0 17 16"><defs><radialGradient id="gd" cx="0.5" cy="0.35" r="0.65"><stop offset="0" stop-color="#1048b8"/><stop offset="1" stop-color="#0a2a80"/></radialGradient></defs><path d="M1.3 11 Q0.8 6.5 3.8 6.2 Q6.3 6.5 6 11 Z M6 10 Q5.8 4.8 8.5 4.6 Q11.2 4.8 11 10 Z M11 11 Q10.7 6.5 13.2 6.2 Q16.2 6.5 15.7 11 Z" fill="#179aa0"/><circle cx="3.8" cy="3.8" r="1.9" fill="#22b8c0"/><circle cx="8.5" cy="2.2" r="1.9" fill="#22b8c0"/><circle cx="13.2" cy="3.8" r="1.9" fill="#22b8c0"/><circle cx="3.4" cy="3.3" r="0.8" fill="#8af0f0"/><circle cx="8.1" cy="1.7" r="0.8" fill="#8af0f0"/><circle cx="12.8" cy="3.3" r="0.8" fill="#8af0f0"/><ellipse cx="8.5" cy="11.2" rx="7.6" ry="4.4" fill="url(#gd)"/><path d="M1.5 12.5 Q8.5 17.5 15.5 12.5 Q8.5 15 1.5 12.5 Z" fill="#40b0f0"/><path d="M4.8 10.8 L7.6 11.8 M9 9.8 L11 10.8" stroke="#f0b020" stroke-width="1.3"/></svg>
<div class="t" style="left:176.5px;top:310.91px;font-size:11px;line-height:11px;color:#000;font-weight:normal;letter-spacing:-0.133px;">Contact Database</div>
<div class="t" style="left:272.5px;top:310.91px;font-size:11px;line-height:11px;color:#000;font-weight:normal;letter-spacing:-0.200px;">3 Files</div>
<div class="t" style="left:308px;top:310.91px;font-size:11px;line-height:11px;color:#000;font-weight:normal;letter-spacing:-0.200px;">0 Folders</div>
<div class="t" style="left:363.5px;top:310.91px;font-size:11px;line-height:11px;color:#000;font-weight:normal;letter-spacing:-0.180px;">Husky Planes : Michael Green</div>
<div style="left:517px;top:311px;width:100px;height:11px;background:#e9e8e4;border:1px solid #fff;box-sizing:border-box;box-shadow:inset 1px 1px 0 #c8c6bc"></div>
<div style="left:518px;top:313px;width:1px;height:7px;background:#3060e0"></div>
<div class="t" style="left:543.5px;top:310.91px;font-size:11px;line-height:11px;color:#000;font-weight:normal;letter-spacing:-0.200px;">38M Free</div>
<svg style="left:704.5px;top:311px;" width="5" height="11" viewBox="0 0 5 11"><circle cx="2.5" cy="1.2" r="1.2" fill="#1a6a30"/><rect x="1" y="3" width="3" height="4" rx="1" fill="#60e0e0" stroke="#106030" stroke-width="1"/><rect x="1.5" y="7" width="2" height="4" fill="#106030"/></svg>
<svg style="left:718px;top:311px;" width="11" height="11" viewBox="0 0 11 11"><rect x="2.5" y="2.5" width="8" height="8" fill="#6c6cd0" stroke="#0000e0" stroke-width="1.2"/><rect x="0.5" y="0.5" width="5.5" height="5.5" fill="#f8dc90" stroke="#e00000" stroke-width="1.2"/></svg>
<svg style="left:735.5px;top:311px;" width="8" height="10" viewBox="0 0 8 10"><path d="M5.6 0.6 L7.8 2.4 L2.8 9.2 L0.3 9.8 L0.8 7.2 Z" fill="#f8c818" stroke="#000" stroke-width="1.1" stroke-linejoin="round"/><path d="M2.2 5.8 L4 7.4 M3.6 3.9 L5.4 5.5 M5 2 L6.8 3.6" stroke="#7a4a00" stroke-width="0.8"/><path d="M0.3 9.8 L0.8 7.2 L2.8 9.2 Z" fill="#000"/></svg>
<svg style="left:755.5px;top:311px;" width="8" height="10" viewBox="0 0 8 10"><path d="M5.6 0.6 L7.8 2.4 L2.8 9.2 L0.3 9.8 L0.8 7.2 Z" fill="#f8c818" stroke="#000" stroke-width="1.1" stroke-linejoin="round"/><path d="M2.2 5.8 L4 7.4 M3.6 3.9 L5.4 5.5 M5 2 L6.8 3.6" stroke="#7a4a00" stroke-width="0.8"/><path d="M0.3 9.8 L0.8 7.2 L2.8 9.2 Z" fill="#000"/></svg>
<svg style="left:747px;top:317px;" width="11" height="6" viewBox="0 0 11 6"><rect x="0.7" y="0.7" width="3.4" height="4.2" fill="#b8c8e0" stroke="#e8860e" stroke-width="1.4"/><path d="M4 4 H10.5 M6.5 4 V2.5 M8.5 4 V2.8" stroke="#e8860e" stroke-width="1.4"/></svg>
<div style="left:151px;top:325px;width:576px;height:173px;background:#fff"></div>
<div style="left:171px;top:329px;width:250px;height:18px;background:#316ac5"></div>
<svg style="left:174px;top:334px;" width="10" height="8" viewBox="0 0 10 8"><rect x="0" y="0.5" width="10" height="3" rx="1" fill="#15508c"/><rect x="0" y="3" width="10" height="5" fill="#e8820e"/><rect x="1" y="3" width="8" height="3.5" fill="#eee8cc"/><rect x="2" y="4" width="2" height="1" fill="#888"/><rect x="5" y="4" width="2" height="1" fill="#888"/><rect x="3" y="6" width="1" height="2" fill="#000"/><rect x="6" y="6" width="1" height="2" fill="#000"/></svg>
<div class="t" style="left:189.8px;top:332.91px;font-size:11px;line-height:11px;color:#fff;font-weight:normal;letter-spacing:-0.200px;">Sam Thompson</div>
<div style="left:171px;top:347px;width:250px;height:117px;box-sizing:border-box;border:1px dotted #000;border-top:none"></div>
<div class="t" style="left:175.5px;top:348.91px;font-size:11px;line-height:11px;color:#000;font-weight:normal;letter-spacing:-0.256px;">E-mail address:</div>
<div class="t" style="left:275.7px;top:348.91px;font-size:11px;line-height:11px;color:#000;font-weight:normal;letter-spacing:-0.123px;">&lt;sthompson@abcco.com&gt;</div>
<div class="t" style="left:175.5px;top:364.91px;font-size:11px;line-height:11px;color:#000;font-weight:normal;letter-spacing:-0.195px;">Business Phone:</div>
<div class="t" style="left:275.7px;top:364.91px;font-size:11px;line-height:11px;color:#000;font-weight:normal;letter-spacing:-0.159px;">905-555-4465 x621</div>
<div class="t" style="left:175.5px;top:380.91px;font-size:11px;line-height:11px;color:#000;font-weight:normal;letter-spacing:-0.490px;">Mobile Phone:</div>
<div class="t" style="left:275.7px;top:380.91px;font-size:11px;line-height:11px;color:#000;font-weight:normal;letter-spacing:-0.114px;">905-555-8443</div>
<div class="t" style="left:175.5px;top:396.91px;font-size:11px;line-height:11px;color:#000;font-weight:normal;letter-spacing:-0.665px;">Home Phone:</div>
<div class="t" style="left:275.7px;top:396.91px;font-size:11px;line-height:11px;color:#000;font-weight:normal;letter-spacing:-0.114px;">905-555-9331</div>
<div class="t" style="left:175.5px;top:412.91px;font-size:11px;line-height:11px;color:#000;font-weight:normal;letter-spacing:-0.395px;">Company:</div>
<div class="t" style="left:275.7px;top:412.91px;font-size:11px;line-height:11px;color:#000;font-weight:normal;letter-spacing:-0.326px;">ABC Company</div>
<div class="t" style="left:175.5px;top:428.91px;font-size:11px;line-height:11px;color:#000;font-weight:normal;letter-spacing:-0.274px;">Web Page:</div>
<div class="t" style="left:275.7px;top:428.91px;font-size:11px;line-height:11px;color:#000;font-weight:normal;letter-spacing:0.504px;">www.abc.com</div>
<div class="t" style="left:175.5px;top:444.91px;font-size:11px;line-height:11px;color:#000;font-weight:normal;letter-spacing:-0.319px;">Notes:</div>
<div class="t" style="left:275.7px;top:444.91px;font-size:11px;line-height:11px;color:#000;font-weight:normal;letter-spacing:0.213px;">Wife: Vicky, newly weds, a...</div>
<div style="left:430px;top:325px;width:2px;height:172px;background:linear-gradient(to right,#8c8c8c 50%,#a8a8a8 50%)"></div>
<div style="left:441px;top:329px;width:250px;height:18px;background:#efecdf"></div>
<svg style="left:444px;top:334px;" width="10" height="8" viewBox="0 0 10 8"><rect x="0" y="0.5" width="10" height="3" rx="1" fill="#15508c"/><rect x="0" y="3" width="10" height="5" fill="#e8820e"/><rect x="1" y="3" width="8" height="3.5" fill="#eee8cc"/><rect x="2" y="4" width="2" height="1" fill="#888"/><rect x="5" y="4" width="2" height="1" fill="#888"/><rect x="3" y="6" width="1" height="2" fill="#000"/><rect x="6" y="6" width="1" height="2" fill="#000"/></svg>
<div class="t" style="left:459.6px;top:332.91px;font-size:11px;line-height:11px;color:#000;font-weight:normal;letter-spacing:-0.200px;">Mike Hart</div>
<div class="t" style="left:445.7px;top:348.91px;font-size:11px;line-height:11px;color:#000;font-weight:normal;letter-spacing:-0.256px;">E-mail address:</div>
<div class="t" style="left:545.5px;top:348.91px;font-size:11px;line-height:11px;color:#000;font-weight:normal;letter-spacing:-0.134px;">mhart@abcco.com</div>
<div class="t" style="left:445.7px;top:364.91px;font-size:11px;line-height:11px;color:#000;font-weight:normal;letter-spacing:-0.195px;">Business Phone:</div>
<div class="t" style="left:545.5px;top:364.91px;font-size:11px;line-height:11px;color:#000;font-weight:normal;letter-spacing:-0.159px;">905-555-4465 x421</div>
<div class="t" style="left:445.7px;top:380.91px;font-size:11px;line-height:11px;color:#000;font-weight:normal;letter-spacing:-0.490px;">Mobile Phone:</div>
<div class="t" style="left:545.5px;top:380.91px;font-size:11px;line-height:11px;color:#000;font-weight:normal;letter-spacing:-0.114px;">905-555-9633</div>
<div class="t" style="left:445.7px;top:396.91px;font-size:11px;line-height:11px;color:#000;font-weight:normal;letter-spacing:-0.395px;">Company:</div>
<div class="t" style="left:545.5px;top:396.91px;font-size:11px;line-height:11px;color:#000;font-weight:normal;letter-spacing:-0.326px;">ABC Company</div>
<div class="t" style="left:445.7px;top:412.91px;font-size:11px;line-height:11px;color:#000;font-weight:normal;letter-spacing:-0.274px;">Web Page:</div>
<div class="t" style="left:545.5px;top:412.91px;font-size:11px;line-height:11px;color:#000;font-weight:normal;letter-spacing:0.504px;">www.abc.com</div>
<div class="t" style="left:445.7px;top:428.91px;font-size:11px;line-height:11px;color:#000;font-weight:normal;letter-spacing:-0.319px;">Notes:</div>
<div class="t" style="left:545.5px;top:428.91px;font-size:11px;line-height:11px;color:#000;font-weight:normal;letter-spacing:-0.128px;">Single, 2 cars</div>
<div style="left:700px;top:325px;width:2px;height:172px;background:linear-gradient(to right,#8c8c8c 50%,#a8a8a8 50%)"></div>
<div style="left:711px;top:329px;width:20px;height:18px;background:#efecdf"></div>
<svg style="left:714px;top:334px;" width="10" height="8" viewBox="0 0 10 8"><rect x="0" y="0.5" width="10" height="3" rx="1" fill="#15508c"/><rect x="0" y="3" width="10" height="5" fill="#e8820e"/><rect x="1" y="3" width="8" height="3.5" fill="#eee8cc"/><rect x="2" y="4" width="2" height="1" fill="#888"/><rect x="5" y="4" width="2" height="1" fill="#888"/><rect x="3" y="6" width="1" height="2" fill="#000"/><rect x="6" y="6" width="1" height="2" fill="#000"/></svg>
<div class="t" style="left:715.5px;top:348.91px;font-size:11px;line-height:11px;color:#000;font-weight:normal;letter-spacing:-0.200px;">E-mail</div>
<div class="t" style="left:715.5px;top:364.91px;font-size:11px;line-height:11px;color:#000;font-weight:normal;letter-spacing:-0.200px;">Business</div>
<div class="t" style="left:715.5px;top:380.91px;font-size:11px;line-height:11px;color:#000;font-weight:normal;letter-spacing:-0.200px;">Mobile</div>
<div class="t" style="left:715.5px;top:396.91px;font-size:11px;line-height:11px;color:#000;font-weight:normal;letter-spacing:-0.200px;">Company</div>
<div class="t" style="left:715.5px;top:412.91px;font-size:11px;line-height:11px;color:#000;font-weight:normal;letter-spacing:-0.200px;">Notes</div>
<div style="left:727px;top:325px;width:41px;height:190px;background:#ece9d8"></div>
<div style="left:736px;top:330px;width:24px;height:14px;border:1px solid #1c3f6e;border-radius:3px;background:linear-gradient(to bottom,#fff 0%,#f4f3ee 60%,#dedbd0 100%)"></div>
<div class="t" style="left:736px;top:332.5px;width:26px;text-align:center;font-size:11px;line-height:11px;color:#000">123</div>
<div style="left:736px;top:351px;width:24px;height:14px;border:1px solid #1c3f6e;border-radius:3px;background:linear-gradient(to bottom,#fff 0%,#f4f3ee 60%,#dedbd0 100%)"></div>
<div class="t" style="left:736px;top:353.5px;width:26px;text-align:center;font-size:11px;line-height:11px;color:#000">a-c</div>
<div style="left:736px;top:372px;width:24px;height:14px;border:1px solid #1c3f6e;border-radius:3px;background:linear-gradient(to bottom,#fff 0%,#f4f3ee 60%,#dedbd0 100%)"></div>
<div class="t" style="left:736px;top:374.5px;width:26px;text-align:center;font-size:11px;line-height:11px;color:#000">d-f</div>
<div style="left:736px;top:393px;width:24px;height:14px;border:1px solid #1c3f6e;border-radius:3px;background:linear-gradient(to bottom,#fff 0%,#f4f3ee 60%,#dedbd0 100%)"></div>
<div class="t" style="left:736px;top:395.5px;width:26px;text-align:center;font-size:11px;line-height:11px;color:#000">g-i</div>
<div style="left:736px;top:414px;width:24px;height:14px;border:1px solid #1c3f6e;border-radius:3px;background:linear-gradient(to bottom,#fff 0%,#f4f3ee 60%,#dedbd0 100%)"></div>
<div class="t" style="left:736px;top:416.5px;width:26px;text-align:center;font-size:11px;line-height:11px;color:#000">j-l</div>
<div style="left:736px;top:435px;width:24px;height:14px;border:1px solid #1c3f6e;border-radius:3px;background:linear-gradient(to bottom,#fff 0%,#f4f3ee 60%,#dedbd0 100%)"></div>
<div class="t" style="left:736px;top:437.5px;width:26px;text-align:center;font-size:11px;line-height:11px;color:#000">m-o</div>
<div style="left:736px;top:456px;width:24px;height:14px;border:1px solid #1c3f6e;border-radius:3px;background:linear-gradient(to bottom,#fff 0%,#f4f3ee 60%,#dedbd0 100%)"></div>
<div class="t" style="left:736px;top:458.5px;width:26px;text-align:center;font-size:11px;line-height:11px;color:#000">p-r</div>
<div style="left:736px;top:477px;width:24px;height:14px;border:1px solid #1c3f6e;border-radius:3px;background:linear-gradient(to bottom,#fff 0%,#f4f3ee 60%,#dedbd0 100%)"></div>
<div class="t" style="left:736px;top:479.5px;width:26px;text-align:center;font-size:11px;line-height:11px;color:#000">s-v</div>
<div style="left:736px;top:498px;width:24px;height:14px;border:1px solid #1c3f6e;border-radius:3px;background:linear-gradient(to bottom,#fff 0%,#f4f3ee 60%,#dedbd0 100%)"></div>
<div class="t" style="left:736px;top:500.5px;width:26px;text-align:center;font-size:11px;line-height:11px;color:#000">w-z</div>
<svg style="left:145px;top:404px;" width="6" height="11" viewBox="0 0 6 11"><path d="M0 0 L6 5.5 L0 11 Z" fill="#000"/></svg>
<div style="left:151px;top:498px;width:576px;height:16px;background:linear-gradient(to bottom,#eeede6 0,#f1f0ea 4px,#fefefe 4px)"></div>
<div style="left:151px;top:498px;width:14px;height:13px;border:1px solid #fff;border-radius:3px;background:linear-gradient(135deg,#d0e0fc,#b8cef8 60%,#a8c2f2);box-shadow:0 0 0 0.5px #b8c8f0"></div>
<svg style="left:151px;top:498px;" width="16" height="15" viewBox="0 0 16 15"><path d="M10 3.5 L5 7.5 L10 11.5" stroke="#4d6185" stroke-width="2.4" fill="none"/></svg>
<div style="left:168px;top:498px;width:384px;height:13px;border:1px solid #fff;border-radius:3px;background:linear-gradient(to bottom,#c8d8f9,#bcd0f8 70%,#aac2f2);box-shadow:inset -1px 0 0 #8aa4e4"></div>
<svg style="left:357px;top:502px;" width="8" height="8" viewBox="0 0 8 8"><path d="M0.5 0 V8 M2.5 0 V8 M4.5 0 V8 M6.5 0 V8" stroke="#eef3fd" stroke-width="1"/></svg>
<div style="left:710px;top:498px;width:14px;height:13px;border:1px solid #fff;border-radius:3px;background:linear-gradient(135deg,#d0e0fc,#b8cef8 60%,#a8c2f2);box-shadow:0 0 0 0.5px #b8c8f0"></div>
<svg style="left:710px;top:498px;" width="16" height="15" viewBox="0 0 16 15"><path d="M6 3.5 L11 7.5 L6 11.5" stroke="#4d6185" stroke-width="2.4" fill="none"/></svg>
<div style="left:143px;top:514px;width:625px;height:1px;background:#aca899"></div>
<div style="left:143px;top:515px;width:625px;height:1px;background:#fff"></div>
<svg style="left:149px;top:521px;" width="16" height="16" viewBox="0 0 16 16"><defs><linearGradient id="sg" x1="0" x2="1"><stop offset="0" stop-color="#9aa0a8"/><stop offset="1" stop-color="#e8f0f8"/></linearGradient></defs><rect x="0" y="0" width="16" height="16" fill="#222"/><rect x="0" y="0" width="15.3" height="15.3" fill="#d8e6f6"/><rect x="0" y="0" width="16" height="4.2" fill="#0024f0"/><rect x="7" y="1" width="2" height="2" fill="#fff8d0"/><rect x="10" y="1" width="2" height="2" fill="#fff8d0"/><rect x="13" y="1" width="2" height="2" fill="#f00000"/><rect x="0" y="4.2" width="6.4" height="11.1" fill="url(#sg)"/><rect x="2" y="6" width="3" height="1" fill="#000"/><rect x="2" y="9" width="3" height="1" fill="#000"/><rect x="2" y="12" width="3" height="1" fill="#000"/><rect x="6.4" y="4.2" width="0.7" height="11.1" fill="#555"/><path d="M9 9.3 L12.7 6 V13 Z" fill="#000"/></svg>
<div style="left:182px;top:519px;width:1px;height:21px;background:#aca899;box-shadow:1px 0 0 #fff"></div>
<div class="t" style="left:199px;top:524.41px;font-size:11px;line-height:11px;color:#000;font-weight:normal;letter-spacing:-0.200px;">1 Item selected.</div>
<svg style="left:729px;top:521px;" width="16" height="16" viewBox="0 0 16 16"><defs><linearGradient id="sg" x1="0" x2="1"><stop offset="0" stop-color="#9aa0a8"/><stop offset="1" stop-color="#e8f0f8"/></linearGradient></defs><rect x="0" y="0" width="16" height="16" fill="#222"/><rect x="0" y="0" width="15.3" height="15.3" fill="#d8e6f6"/><rect x="0" y="0" width="16" height="4.2" fill="#0024f0"/><rect x="7" y="1" width="2" height="2" fill="#fff8d0"/><rect x="10" y="1" width="2" height="2" fill="#fff8d0"/><rect x="13" y="1" width="2" height="2" fill="#f00000"/><rect x="0" y="4.2" width="6.4" height="11.1" fill="url(#sg)"/><rect x="2" y="6" width="3" height="1" fill="#000"/><rect x="2" y="9" width="3" height="1" fill="#000"/><rect x="2" y="12" width="3" height="1" fill="#000"/><rect x="6.4" y="4.2" width="0.7" height="11.1" fill="#555"/><rect x="8" y="6" width="6" height="1" fill="#000"/><rect x="7.1" y="8.5" width="8.2" height="6.8" fill="#f8c848"/><rect x="7.1" y="8" width="8.2" height="0.6" fill="#444"/></svg>
<div style="left:139px;top:308px;width:1px;height:238px;background:#fff"></div>
</div>
</body></html>
